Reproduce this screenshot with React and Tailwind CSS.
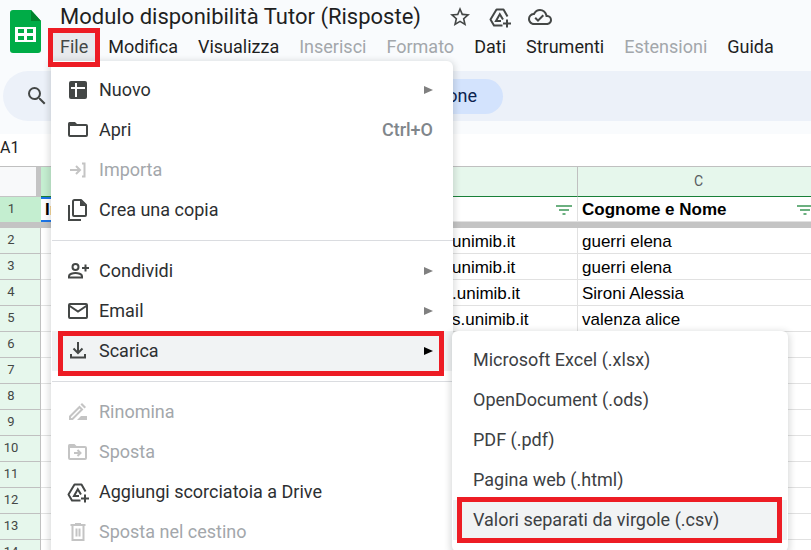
import React from "react";
import { MdStarBorder, MdOutlineCloudDone, MdSearch } from "react-icons/md";

function Icon({ children, className = "size-6" }) {
  return (
    <svg viewBox="0 0 24 24" className={className} fill="none" stroke="currentColor" strokeWidth="2" aria-hidden="true">
      {children}
    </svg>
  );
}

const AddToDrive = () => (
  <Icon>
    <path d="M14.5 20.5H6L2.5 14.5L8.5 4.5H15.5L19.5 11.5" strokeLinejoin="round" />
    <path d="M13 16H8L11.8 9.3L15 14.5" />
    <path d="M19 14.5v8M15 18.5h8" />
  </Icon>
);

const icons = {
  nuovo: (
    <Icon>
      <rect x="3" y="3" width="18" height="18" rx="2" fill="currentColor" stroke="none" />
      <path d="M5 10h14M10 5v14" stroke="#fff" />
    </Icon>
  ),
  apri: (
    <Icon>
      <rect x="3" y="7" width="18" height="11" rx="1" />
      <path d="M2 8V5.5q0-1.500 1.500-1.500H9l2.500 2.500V8z" fill="currentColor" stroke="none" />
    </Icon>
  ),
  importa: (
    <Icon>
      <path d="M4 12h9.500M10 8l4 4l-4 4M16 5.500h2.500v13H16" />
    </Icon>
  ),
  copia: (
    <Icon>
      <path d="M15 2H8.500Q7 2 7 3.500V17q0 1 1 1H19q1 0 1-1V7z" strokeLinejoin="round" />
      <path d="M14 2v6h6z" fill="currentColor" stroke="none" />
      <path d="M3 7v15h12" />
    </Icon>
  ),
  condividi: (
    <Icon>
      <circle cx="9.500" cy="8" r="3" />
      <path d="M3 18.500v-1.500c0-2 4-3 6.500-3s6.500 1 6.500 3v1.500z" />
      <path d="M19.500 5.500v7M16 9h7" />
    </Icon>
  ),
  email: (
    <Icon>
      <rect x="3" y="5" width="18" height="14" rx="1" />
      <path d="M3 6.500l9 6l9-6" />
    </Icon>
  ),
  scarica: (
    <Icon>
      <path d="M12 3v11M7.500 9.500L12 14l4.500-4.500M5 15v3.500h14V15" />
    </Icon>
  ),
  rinomina: (
    <Icon>
      <path d="M4 19v-2.500L13.500 7l2.500 2.500L6.500 19z" />
      <path d="M14.500 4.500l1.500-1.500l4 4l-1.500 1.500zM15 16h6v4H11z" fill="currentColor" stroke="none" />
    </Icon>
  ),
  sposta: (
    <Icon>
      <rect x="3" y="7" width="17" height="12" rx="1" />
      <path d="M2 8V5.500q0-1.500 1.500-1.500H8.500l2.500 2.500V8z" fill="currentColor" stroke="none" />
      <path d="M8 13h6M11.500 10l3 3l-3 3" />
    </Icon>
  ),
  drive: <AddToDrive />,
  cestino: (
    <Icon>
      <path d="M4.500 5h15M9 4h6M6.500 5v15h11V5M10.500 8.500v8M13.500 8.500v8" />
    </Icon>
  ),
};

const menuBar = [
  ["File", "active"],
  ["Modifica"],
  ["Visualizza"],
  ["Inserisci", "off"],
  ["Formato", "off"],
  ["Dati"],
  ["Strumenti"],
  ["Estensioni", "off"],
  ["Guida"],
];

const fileMenu = [
  [
    { icon: "nuovo", label: "Nuovo", sub: true },
    { icon: "apri", label: "Apri", keys: "Ctrl+O" },
    { icon: "importa", label: "Importa", off: true },
    { icon: "copia", label: "Crea una copia" },
  ],
  [
    { icon: "condividi", label: "Condividi", sub: true },
    { icon: "email", label: "Email", sub: true },
    { icon: "scarica", label: "Scarica", sub: true, active: true },
  ],
  [
    { icon: "rinomina", label: "Rinomina", off: true },
    { icon: "sposta", label: "Sposta", off: true },
    { icon: "drive", label: "Aggiungi scorciatoia a Drive" },
    { icon: "cestino", label: "Sposta nel cestino", off: true },
  ],
];

const formats = [
  "Microsoft Excel (.xlsx)",
  "OpenDocument (.ods)",
  "PDF (.pdf)",
  "Pagina web (.html)",
  "Valori separati da virgole (.csv)",
];

const rows = [
  ["unimib.it", "guerri elena"],
  ["unimib.it", "guerri elena"],
  [".unimib.it", "Sironi Alessia"],
  ["s.unimib.it", "valenza alice"],
  ...Array.from({ length: 9 }, () => ["", ""]),
];

function SheetsLogo() {
  return (
    <svg viewBox="0 0 31 43" className="h-[43px] w-[31px]" aria-hidden="true">
      <path d="M3 0H21L31 11V40q0 3-3 3H3q-3 0-3-3V3q0-3 3-3z" fill="#00ac47" />
      <path d="M21 0L31 11H21z" fill="#00832d" />
      <path d="M5 17h21v15H5z" fill="#fff" />
      <path d="M8 19h6v4H8zM17 19h6v4h-6zM8 26h6v4H8zM17 26h6v4h-6z" fill="#00ac47" />
    </svg>
  );
}

function FilterIcon() {
  return (
    <svg viewBox="0 0 16 10" className="h-[10px] w-4 shrink-0" stroke="#3c9657" strokeWidth="1.500" aria-hidden="true">
      <path d="M0 1h16M3 5h10M6.500 9h3" />
    </svg>
  );
}

function Header() {
  return (
    <header className="bg-[#f9fbfd] pb-[13px]">
      <div className="flex">
        <div className="w-[50px] shrink-0 pt-[10px] pl-[10px]">
          <SheetsLogo />
        </div>
        <div>
          <div className="flex h-[33px] items-center pt-px pl-[10px] text-[#444746]">
            <h1 className="mr-[27px] text-[22px] leading-8 whitespace-nowrap text-[#1f1f1f]">
              Modulo disponibilità Tutor (Risposte)
            </h1>
            <div className="flex gap-4">
              <button aria-label="Speciali"><MdStarBorder className="size-6" /></button>
              <button aria-label="Aggiungi a Drive"><AddToDrive /></button>
              <button aria-label="Stato documento"><MdOutlineCloudDone className="size-6" /></button>
            </div>
          </div>
          <nav className="flex h-7">
            {menuBar.map(([label, state]) => (
              <button
                key={label}
                disabled={state === "off"}
                className={`px-[10px] text-lg whitespace-nowrap ${
                  state === "off" ? "text-[#a3a7ab]" : state === "active" ? "bg-[#e8eaed] text-[#444746]" : "text-[#1f1f1f]"
                }`}
              >
                {label}
              </button>
            ))}
          </nav>
        </div>
      </div>
      <div className="mt-[10px] ml-[3px] flex h-[50px] items-center rounded-l-full bg-[#ecf1f9] pl-[22px]">
        <button aria-label="Cerca" className="text-[#444746]"><MdSearch className="size-6" /></button>
        <button className="ml-[301px] h-[35px] w-[153px] rounded-full bg-[#d3e3fd] pr-[26px] text-right text-lg text-[#0b2350]">
          one
        </button>
      </div>
    </header>
  );
}

function Sheet() {
  const head = "border-r border-b border-r-[#c0c0c0] border-b-[#188038] font-normal";
  const rowHead = "pr-[18px] pb-[2px] text-center text-[13px] leading-4 font-normal text-[#444746] font-[Roboto,sans-serif]";
  const cell = "border-r border-b border-[#e1e1e1] whitespace-nowrap";
  return (
    <main className="overflow-hidden bg-white">
      <div className="flex h-8 items-center pb-1 text-base text-[#1f1f1f]">A1</div>
      <table className="w-[920px] table-fixed border-separate border-spacing-0 border-t border-[#c0c0c0] font-['Liberation_Sans',Arial,sans-serif] text-[17px] leading-5 text-black">
        <colgroup>
          <col className="w-[41px]" />
          <col className="w-[209px]" />
          <col className="w-[328px]" />
          <col className="w-[242px]" />
          <col />
        </colgroup>
        <thead>
          <tr className="h-[30px] text-sm text-[#575b5f]">
            <th className="border-r-[5px] border-b border-[#c4c4c4] bg-[#f8f9fa]" />
            <th className={`${head} bg-[#c4eed0]`} />
            <th className={`${head} bg-[#e6f7ec]`} />
            <th className={`${head} bg-[#e6f7ec] pb-[2px] font-[Roboto,sans-serif]`}>C</th>
            <th className={`${head} bg-[#e6f7ec]`} />
          </tr>
        </thead>
        <tbody>
          <tr className="h-[25px] font-bold">
            <th className={`${rowHead} bg-[#c4eed0]`}>1</th>
            <td className="border-y-2 border-[#1a73e8] pl-1">In</td>
            <td className={cell}>
              <div className="flex items-center justify-end pt-[2px] pr-[5px]"><FilterIcon /></div>
            </td>
            <td className={cell}>
              <div className="flex items-center justify-between pt-[2px] pr-[6px] pl-1">Cognome e Nome<FilterIcon /></div>
            </td>
            <td className={cell} />
          </tr>
          <tr className="h-[6px]">
            <td colSpan={5} className="bg-[#c4c4c4]" />
          </tr>
          {rows.map(([mail, name], i) => (
            <tr key={i} className="h-[26px]">
              <th className={`${rowHead} border-r border-b border-[#c0c0c0] bg-[#e6f7ec]`}>{i + 2}</th>
              <td className={cell} />
              <td className={`${cell} pt-[2px] pl-[202px]`}>{mail}</td>
              <td className={`${cell} pt-[2px] pl-1`}>{name}</td>
              <td className={cell} />
            </tr>
          ))}
        </tbody>
      </table>
    </main>
  );
}

function FileMenu() {
  return (
    <div
      role="menu"
      className="absolute top-[61px] left-[51px] w-[402px] rounded-tr-md bg-white pt-[9px] pl-px shadow-[0_2px_6px_2px_rgba(60,64,67,0.18)]"
    >
      {fileMenu.map((group, g) => (
        <div key={g} className={g > 0 ? "mt-[10px] border-t border-[#dadce0] pt-[10px]" : ""}>
          {group.map((item) => (
            <button
              key={item.label}
              role="menuitem"
              disabled={item.off}
              className={`flex h-10 w-full items-center pr-5 pl-[14px] text-left text-lg ${
                item.active ? "bg-[#f1f3f4]" : ""
              } ${item.off ? "text-[#a3a7ab]" : "text-[#2d2f31]"}`}
            >
              <span className={item.off ? "text-[#c4c4c4]" : "text-[#444746]"}>{icons[item.icon]}</span>
              <span className="ml-[9px] grow">{item.label}</span>
              {item.keys && <span className="font-medium text-[#80868b]">{item.keys}</span>}
              {item.sub && (
                <svg viewBox="0 0 9 8" className={`h-2 w-[9px] ${item.active ? "text-black" : "text-[#808080]"}`} aria-hidden="true">
                  <path d="M0 0L9 4L0 8z" fill="currentColor" />
                </svg>
              )}
            </button>
          ))}
        </div>
      ))}
    </div>
  );
}

function DownloadMenu() {
  return (
    <div
      role="menu"
      className="absolute top-[331px] left-[452px] w-[336px] rounded-md bg-white px-px pt-[9px] pb-3 shadow-[0_2px_6px_2px_rgba(60,64,67,0.18)]"
    >
      {formats.map((label, i) => (
        <button
          key={label}
          role="menuitem"
          className={`block h-10 w-full pl-5 text-left text-lg text-[#3c4043] ${i === formats.length - 1 ? "bg-[#f1f3f4]" : ""}`}
        >
          {label}
        </button>
      ))}
    </div>
  );
}

export default function App() {
  return (
    <div className="relative h-screen overflow-hidden bg-white font-[Roboto,sans-serif]">
      <Header />
      <Sheet />
      <FileMenu />
      <DownloadMenu />
      <div className="pointer-events-none absolute top-[28px] left-[48px] h-[39px] w-[52px] border-5 border-[#ed1c24]" />
      <div className="pointer-events-none absolute top-[331px] left-[58px] h-[45px] w-[386px] border-5 border-[#ed1c24]" />
      <div className="pointer-events-none absolute top-[497px] left-[457px] h-[46px] w-[325px] border-5 border-[#ed1c24]" />
    </div>
  );
}
